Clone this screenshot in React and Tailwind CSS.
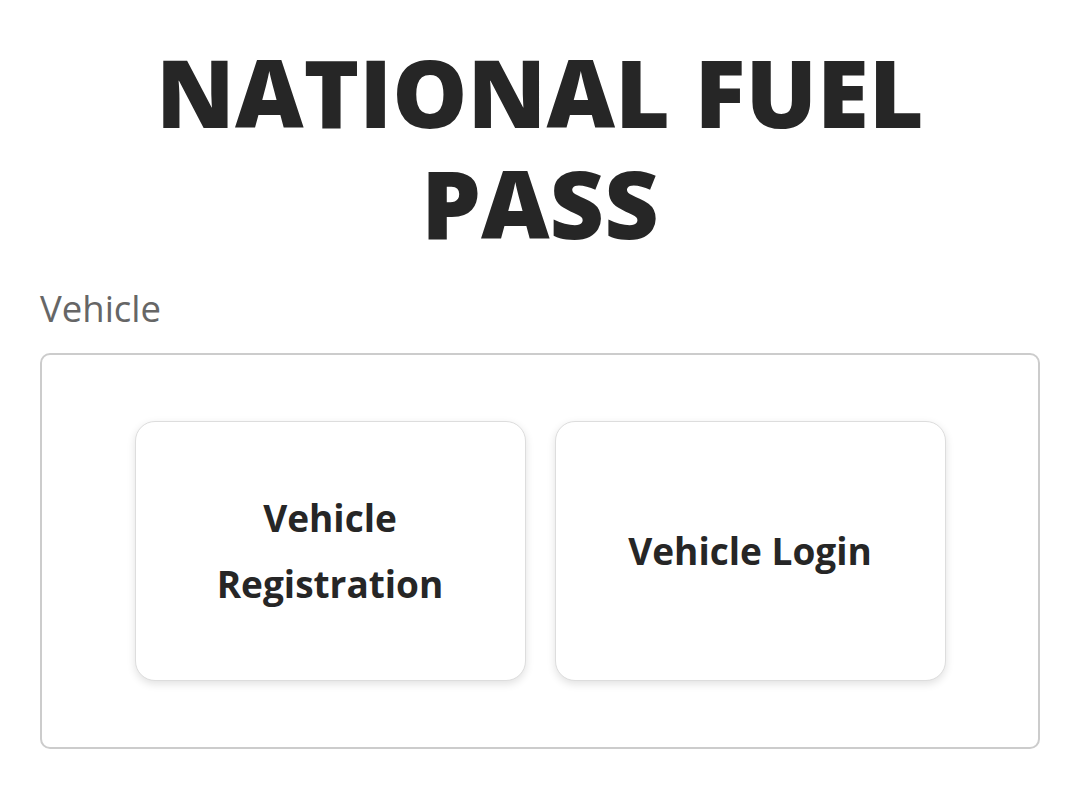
import React from "react";

const Card = ({ children }) => (
  <button className="w-[391px] h-[260px] bg-white rounded-[20px] border border-[#dddddd] shadow-[0_3px_8px_rgba(0,0,0,0.12)] flex items-center justify-center px-8">
    <span className="text-[37px] leading-[66px] font-bold text-[#262626] text-center">{children}</span>
  </button>
);

export default function App() {
  return (
    <div className="min-h-screen bg-white px-10 pt-[36px] font-['Open_Sans',sans-serif]">
      {/* Title */}
      <h1 className="text-[94.5px] leading-[111px] font-extrabold text-[#262626] text-center">
        NATIONAL FUEL
        <br />
        PASS
      </h1>

      {/* Vehicle section */}
      <p className="mt-[25px] text-[36.5px] leading-[50px] text-[#666666]">Vehicle</p>
      <div className="mt-[20px] h-[396px] border-2 border-[#cccccc] rounded-[10px] flex items-center justify-center gap-[29px]">
        <Card>
          Vehicle
          <br />
          Registration
        </Card>
        <Card>Vehicle Login</Card>
      </div>
    </div>
  );
}
